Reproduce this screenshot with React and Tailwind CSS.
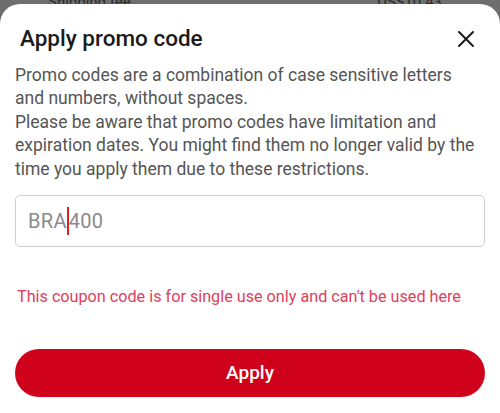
import React from "react";

export default function App() {
  return (
    <div className="w-[500px] h-[413px] bg-[#6e6e6e] overflow-hidden relative" style={{ fontFamily: "Roboto, 'Noto Sans', sans-serif" }}>
      <div className="absolute top-[-9px] left-[48px] text-[15px] text-[#2a2a2a]">Shipping fee</div>
      <div className="absolute top-[-9px] right-[58px] text-[15px] text-[#2a2a2a]">US$10.43</div>
      <div className="relative mt-[4px] h-[409px] bg-white rounded-t-[20px]">
        <div className="flex items-center justify-between pl-[20px] pr-[24px] pt-[19px]">
          <h1 className="text-[22.5px] leading-[30px] font-medium text-[#1a1a1a]">Apply promo code</h1>
          <svg width="20" height="20" viewBox="0 0 20 20" className="mt-[2px]">
            <path d="M3 3 L17 17 M17 3 L3 17" stroke="#1a1a1a" strokeWidth="2" strokeLinecap="round" />
          </svg>
        </div>
        <p className="px-[15px] mt-[11px] text-[17.5px] leading-[23.4px] text-[#555]">
          Promo codes are a combination of case sensitive letters<br />
          and numbers, without spaces.<br />
          Please be aware that promo codes have limitation and<br />
          expiration dates. You might find them no longer valid by the<br />
          time you apply them due to these restrictions.
        </p>
        <div className="mx-[15px] mt-[14px] h-[52px] border border-[#cfcfcf] rounded-[5px] flex items-center px-[12px]">
          <span className="text-[20px] text-[#8a8a8a] tracking-[0.3px]">BRA</span>
          <span className="w-[2px] h-[28px] bg-[#e02020]"></span>
          <span className="text-[20px] text-[#8a8a8a] tracking-[0.3px]">400</span>
        </div>
        <p className="px-[17px] mt-[38px] text-[16.2px] text-[#e0405a]">This coupon code is for single use only and can't be used here</p>
        <button className="mx-[15px] mt-[40px] w-[470px] h-[48px] rounded-full bg-[#d0021b] text-white text-[19px] font-medium">Apply</button>
      </div>
    </div>
  );
}
